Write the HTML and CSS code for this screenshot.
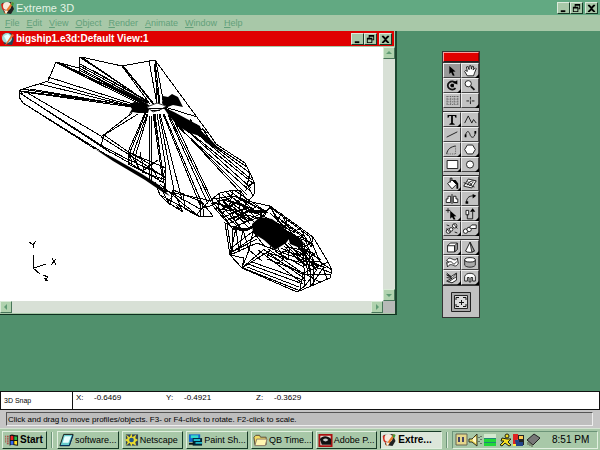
FILE: index.html
```html
<!DOCTYPE html>
<html lang="en">
<head>
<meta charset="utf-8">
<title>Extreme 3D</title>
<link rel="stylesheet" href="styles.css">
</head>
<body>
<svg class="defs" aria-hidden="true">
  <symbol id="min" viewBox="0 0 12 11"><path d="M3 8h5v2H3z"/></symbol>
  <symbol id="restore" viewBox="0 0 12 11"><path d="M4 1h6v6H8V6h1V3H5v1H4zM2 4h6v6H2zM3 6v3h4V6z" fill-rule="evenodd"/></symbol>
  <symbol id="close" viewBox="0 0 12 11"><path d="M2 2h2l2 2 2-2h2v1L7 6l3 3v1H8L6 8l-2 2H2V9l3-3-3-3z"/></symbol>
  <symbol id="e3d" viewBox="0 0 14 14"><path d="M1 2l9-1 3 7-3 5-7-1z" fill="#222"/><path d="M0 3l3-1 1 9-3-3z" fill="#d62a1c"/><circle cx="6" cy="5" r="4" fill="#f6e9dc"/><path d="M13 2L5 13l-2-1 8-11z" fill="#e8792a"/><path d="M11 1l2 1-1 3-2-1z" fill="#389b40"/><path d="M3 9l4 1-2 3z" fill="#f8f0e0"/></symbol>
  <symbol id="doc" viewBox="0 0 14 14"><path d="M1 2l9-1 3 6-2 6-8-1z" fill="#245"/><path d="M0 3l3-1 1 9-3-3z" fill="#d62a1c"/><circle cx="6" cy="6" r="5" fill="#9ee0dc"/><path d="M3 4l4-2 3 3-4 5z" fill="#e6ffff"/><path d="M13 3L6 12l-2 1 7-11z" fill="#e87030"/></symbol>
</svg>

<header class="titlebar">
  <svg class="app-icon"><use href="#e3d"/></svg>
  <h1>Extreme 3D</h1>
  <div class="controls">
    <button aria-label="Minimize"><svg><use href="#min"/></svg></button>
    <button aria-label="Restore"><svg><use href="#restore"/></svg></button>
    <button class="close" aria-label="Close"><svg><use href="#close"/></svg></button>
  </div>
</header>

<nav class="menu">
  <button><u>F</u>ile</button>
  <button><u>E</u>dit</button>
  <button><u>V</u>iew</button>
  <button><u>O</u>bject</button>
  <button><u>R</u>ender</button>
  <button><u>A</u>nimate</button>
  <button><u>W</u>indow</button>
  <button><u>H</u>elp</button>
</nav>

<main class="workspace">
  <section class="view">
    <header class="view-title">
      <svg class="app-icon"><use href="#doc"/></svg>
      <h2>bigship1.e3d:Default View:1</h2>
      <div class="controls">
        <button aria-label="Minimize view"><svg><use href="#min"/></svg></button>
        <button aria-label="Restore view"><svg><use href="#restore"/></svg></button>
        <button class="close" aria-label="Close view"><svg><use href="#close"/></svg></button>
      </div>
    </header>
    <div class="view-body">
      <svg class="scene" viewBox="0 47 383 254" preserveAspectRatio="xMinYMin meet" role="img" aria-label="Wireframe ship">
        <g class="wire">
          <!-- wings and upper hull -->
          <path d="M20 90L48 81L56 62L79 68V58L81 57L122 66L155 60L210 135M20 90L19 97L23 103L110 157L167 191M20 90L23 95L104 147M20 93L105 149L166 184M23 103L95 149M26 92L101 136"/>
          <path d="M56 62L146 104M56 62L143 103M79 68L146 104M79 72L145 105M80 66L147 103M81 58L148 102M83 58L149 103M48 77L133 104M48 82L134 106M40 84L134 107M22 89L132 106M24 92L132 107M30 89L131 106M57 63L138 103M79 70L142 102M62 64L139 101M92 70L146 100M80 64L140 97M21 91L128 105"/>
          <path d="M79 72L79 57M122 66L150 104M123 66L153 104M125 68L154 104M149 61L157 104M155 60L157 104M155 61L160 104M156 61L164 105M154 64L159 103M165 107L197 117"/>
          <path d="M132 113L101 137M138 114L104 135L101 145L110 153M104 135L130 153L166 168M104 147L133 162M101 137L166 178"/>
          <path d="M145 113L128 152L129 164M146 113L130 152L132 165M147 114L133 154M148 114L135 157L138 168M149 114L150 180M151 114L152 182M153 114L162 176M154 114L164 180M155 114L165 191M157 114L166 168L165 190M159 114L174 190M160 114L182 200M163 114L200 205M164 114L203 206M168 115L208 204M169 115L211 202M172 116L212 200"/>
          <path d="M130 153L128 164L140 170L130 153L150 164L142 172L166 180M140 152L144 170L158 160M150 164L160 182L166 168M128 159L163 176"/>
          <path d="M210 135L216 144L245 163L250 173L254 182L255 193L247 203M179 128L250 191M182 126L251 188M188 131L254 184M190 128L252 180M198 134L250 173M205 139L247 167M176 124L247 195M174 121L240 192M250 173L246 190L254 182L248 186L253 196"/>
          <path d="M163 107L212 143M166 108L215 145M172 112L208 133M196 124L206 138M190 119L200 135M202 128L212 143"/>
        </g>
        <g class="mass">
          <path d="M129 105L134 102L146 103L150 106L148 113L138 113L133 112L129 114L132 109Z"/>
          <path d="M163 96L168 97L172 94L178 97L180 101L183 107L173 105L165 108L162 103Z"/>
          <path d="M163 107L174 112L200 126L203 137L190 133L179 127L170 117Z"/>
          <path d="M199 129L212 141L223 153L205 142Z"/>
          <path d="M95 149L112 157L142 174L159 185L170 196L164 193L145 180L113 161Z"/>
          <path d="M252 224L260 217L272 219L279 224L292 235L286 243L275 250L264 240L253 233Z"/>
          <path d="M110 83L146 101L148 104L138 100ZM112 90L138 100L147 104Z"/>
          <path d="M288 236L297 236L304 243L300 248L290 244Z"/>
        </g>
        <path class="hub" d="M147 107L157 103L166 106L162 109L153 112Z"/>
        <path class="wire" d="M149 108h15M151 110h9"/>
        <g class="wire">
          <!-- underside of the hull -->
          <path d="M155 182L160 195L167 202L183 212L178 204L200 217L213 216M159 185L170 205L173 190L183 212M160 184L182 203L200 217L201 201L213 216M165 191L198 198L212 201M163 188L200 209L213 205M160 195L181 206M173 190L202 202L204 216M183 193L185 209L196 215L210 200M176 205L181 211M167 202L175 194"/>
          <!-- neck -->
          <path d="M212 205L212 199L220 193L233 190L241 191L247 201L270 206M212 199L234 196L247 203M211 204L236 196L254 206L267 211L249 230L232 228L212 205M213 202L230 225M216 199L242 229M219 196L249 228M222 194L255 223M226 192L259 220M230 191L263 217M234 190L268 213M212 205L220 200L240 203L260 213M218 211L235 203L253 211M224 217L243 209L262 215M230 223L247 215L260 218M233 190L229 208L240 230M241 191L239 212L250 224M247 203L235 223M220 193L218 211M241 198L262 210M214 208L246 213M217 203L251 220M221 214L240 199M226 221L256 207M233 228L264 212M225 199L246 206M222 205L240 212M212 203L233 207L245 216M216 207L236 225M223 202L245 220M229 200L250 218M233 198L256 214M228 214L246 208M232 219L250 211"/>
          <!-- nose -->
          <path d="M270 206L313 237L327 260L332 270L330 278L297 292L242 268L230 255L225 223L233 227L265 215L270 206M263 212L271 208L309 236L320 262L332 270M270 206L278 222L281 213L292 234L300 228L311 247L313 237M271 208L284 229M287 218L285 233L307 239M230 255L236 228L239 252L243 230L249 250L253 231L265 247M227 224L232 255M230 249L252 232M233 228L232 252L260 233M230 255L257 243L275 250M230 253L257 239M242 268L263 250M242 268L249 250L262 261M242 268L269 251M230 255L244 258L242 268"/>
          <path d="M247 267L299 287M248 264L303 284M252 262L306 281M243 268L298 290M258 250L301 282M263 249L305 279M268 249L304 274M269 253L315 267M275 250L320 266M281 248L326 268M265 253L302 274L330 274M267 259L304 273L328 262M281 239L307 267M287 233L308 260M290 234L316 270M294 236L318 268M298 239L321 262M301 239L304 255L290 247L288 260L275 251"/>
          <path d="M297 292L305 286L303 249L309 249L311 286L330 278M300 290L303 273L320 282M305 286L318 268L332 273M311 286L323 268L327 279M303 249L321 260M300 259L326 268M305 239L314 262L313 287M296 237L312 243L301 248L315 254L304 261L319 262M286 247L302 250M282 251L307 256M278 253L304 267M271 246L267 257M278 248L284 259L277 264M263 216L294 232M270 213L301 241M277 217L304 236M281 221L311 243M302 244L310 272M304 243L308 276M288 243L306 262M284 246L305 266"/>
          <path class="dense" d="M277 226L300 240M233 228L246 230L262 222M250 212L266 211"/>
          <!-- axes -->
          <path d="M33.500 255V268L46 264M33 268L40 274M29 242L33 245L36 241M33 245V248M52 258L56 265M56 259L51 265M43 275L48 277L45 281M45 281L48 280M44 278l3 1"/>
        </g>
      </svg>
      <div class="vscroll"><button aria-label="Scroll up"><svg viewBox="0 0 8 8"><path d="M1 5l3-3 3 3z"/></svg></button><button aria-label="Scroll down"><svg viewBox="0 0 8 8"><path d="M1 3l3 3 3-3z"/></svg></button></div>
    </div>
    <div class="bottom">
      <div class="hscroll"><button aria-label="Scroll left"><svg viewBox="0 0 8 8"><path d="M5 1L2 4l3 3z"/></svg></button><button aria-label="Scroll right"><svg viewBox="0 0 8 8"><path d="M3 1l3 3-3 3z"/></svg></button></div>
      <div class="corner"></div>
    </div>
  </section>

  <aside class="palette" aria-label="Tools">
    <div class="grip"></div>
    <div class="tools">
      <button class="on flat" aria-label="Select"><svg viewBox="0 0 18 14"><path class="k" d="M6 2l7 6-3 .5 2 4-2 .5-2-4-2 2z"/></svg></button>
      <button aria-label="Pan"><svg viewBox="0 0 18 14"><path class="w" d="M6 13L3 8l1-1 2 1-1-5 1.500-.5L8 6V2l2-.5.5 4 1-3.500 1.500.5-.5 4L15 4l1 1-2 5-1 3z"/></svg></button>
      <button aria-label="Rotate view"><svg viewBox="0 0 18 14"><path class="l b" d="M13 4a5 4.500 0 1 0 0 6M7 7h4"/><path class="k" d="M10 4l5-3v5zM8 5h3v4H8z"/></svg></button>
      <button class="flat" aria-label="Zoom"><svg viewBox="0 0 18 14"><circle class="w" cx="7" cy="5" r="3.500"/><path class="l b" d="M10 8l4 4"/></svg></button>
      <button class="flat" aria-label="Grid"><svg viewBox="0 0 18 14"><path class="dots" d="M3 2.500h13M3 5.500h13M3 8.500h13M3 11.500h13M3.500 2v10M7.500 2v10M11.500 2v10M15.500 2v10"/></svg></button>
      <button aria-label="Center point"><svg viewBox="0 0 18 14"><path class="l" d="M9.500 3v3M9.500 8v3M5 7.500h3M11 7.500h3M9 7.500h1"/></svg></button>
    </div>
    <div class="tools">
      <button aria-label="Text"><svg viewBox="0 0 18 14"><path class="k" d="M4 2h10v3h-1l-1-2h-2v8l2 1v1H6v-1l2-1V3H6L5 5H4z"/></svg></button>
      <button class="flat" aria-label="Polyline"><svg viewBox="0 0 18 14"><path class="l" d="M3 11L7 3l4 8 2-4 3 4"/></svg></button>
      <button class="flat" aria-label="Line"><svg viewBox="0 0 18 14"><path class="l" d="M3 10l12-6"/></svg></button>
      <button class="flat" aria-label="Spline"><svg viewBox="0 0 18 14"><path class="l" d="M4 8c1-6 4-5 5-1s5 5 6-2"/><path class="k" d="M3 7h2v3H3zM14 3h2v3h-2z"/></svg></button>
      <button aria-label="Arc"><svg viewBox="0 0 18 14"><path class="l" d="M3 12c1-6 5-8 10-9"/><path class="dots" d="M13 3v9H3"/></svg></button>
      <button aria-label="Polygon"><svg viewBox="0 0 18 14"><path class="w" d="M6 2h6l3 5-3 5H6L3 7z"/></svg></button>
      <button aria-label="Rectangle"><svg viewBox="0 0 18 14"><path class="w" d="M3.500 2.500h12v9h-12z"/></svg></button>
      <button aria-label="Oval"><svg viewBox="0 0 18 14"><circle class="w" cx="9" cy="7" r="4"/></svg></button>
    </div>
    <div class="tools">
      <button aria-label="Paint bucket"><svg viewBox="0 0 18 14"><path class="w" d="M4 7l5-4 5 5-5 5z"/><path class="k" d="M9 3l4 0 3 4v6h-2V8z"/><path class="l" d="M7 6V1h2v3"/></svg></button>
      <button class="flat" aria-label="Surface"><svg viewBox="0 0 18 14"><path class="w" d="M2 10l5-8 9 2-5 8z"/><path class="l" d="M2 6l12 5M6 9c1-4 5-5 7-5M8 10l5-5M6 5c2 1 5 2 5 4"/></svg></button>
      <button class="flat" aria-label="Mirror"><svg viewBox="0 0 18 14"><path class="w" d="M2.500 7.500h2v-3h3v7h-5zM15.500 7.500h-2v-3h-3v7h5z"/><path class="l" d="M9 2v11"/></svg></button>
      <button class="flat" aria-label="Bend"><svg viewBox="0 0 18 14"><path class="l" d="M5 12c0-5 2-8 8-8"/><path class="k" d="M12 2l4 2-4 3zM4 10h3v3H4z"/></svg></button>
      <button aria-label="Edit points"><svg viewBox="0 0 18 14"><path class="k" d="M7 4l7 6-3 .5 2 3-2 .5-2-3-2 2z"/><path class="l" d="M2 3.500h5M4.500 1v5"/></svg></button>
      <button aria-label="Align"><svg viewBox="0 0 18 14"><path class="w" d="M4.500 3.500h3v5h-3z"/><path class="l" d="M6 8v5h6V5"/><path class="k" d="M9 5l3-4 3 4z"/></svg></button>
      <button aria-label="Link"><svg viewBox="0 0 18 14"><g class="w"><circle cx="5" cy="10" r="2.500"/><circle cx="8" cy="8" r="2"/><circle cx="12" cy="4" r="2.500"/></g><path class="l" d="M3 7l4 5M11 2l4 5M3 3l3 1M12 11l3 1"/></svg></button>
      <button aria-label="Unlink"><svg viewBox="0 0 18 14"><g class="w"><circle cx="4" cy="10" r="2.500"/><circle cx="8" cy="8" r="2.500"/><path d="M8 6l3-3h5v4h-5z"/></g></svg></button>
    </div>
    <div class="tools">
      <button aria-label="Cube"><svg viewBox="0 0 18 14"><path class="w" d="M4 5l3-3h8v7l-3 3H4z"/><path class="g" d="M12 5l3-3v7l-3 3z"/><path class="l" d="M4 5h8v7"/></svg></button>
      <button aria-label="Cone"><svg viewBox="0 0 18 14"><path class="w" d="M9 1l5 10c-2 2-8 2-10 0z"/><path class="g" d="M9 1l5 10-3 1z"/></svg></button>
      <button class="flat" aria-label="Extrude"><svg viewBox="0 0 18 14"><path class="w" d="M3 5c2-4 4-3 6-2s4 2 6-1l1 6c-2 4-4 3-6 2s-4-1-6 2l-1-5 2-1z"/><path class="l" d="M4 8c2-3 5-2 6 0s3 0 4-2"/></svg></button>
      <button class="flat" aria-label="Lathe"><svg viewBox="0 0 18 14"><path class="g" d="M3 4v6c2 3 10 3 12 0V4z"/><ellipse class="w" cx="9" cy="4" rx="6" ry="2.500"/></svg></button>
      <button aria-label="Sweep"><svg viewBox="0 0 18 14"><path class="w" d="M3 4l5 2 6-4v8l-5 3-6-2 6-3z"/><path class="l" d="M3 2l5 4M3 7l6 1 5-5M5 12l9-6"/></svg></button>
      <button aria-label="Skin"><svg viewBox="0 0 18 14"><path class="w" d="M3 11V6c1-5 11-5 12 0v5h-3V7h-2v5H8V7H6v4z"/></svg></button>
    </div>
    <div class="snap"><button aria-label="Working plane"><svg viewBox="0 0 20 20"><path class="g" d="M.5.5h19v19H.5z"/><path class="pale" d="M3.500 3.500h13v13h-13z"/><path class="l" d="M5 8V5.500h3M15 8V5.500h-3M5 12v2.500h3M15 12v2.500h-3M10.500 8v5M8 10.500h5"/></svg></button></div>
  </aside>
</main>

<section class="coords">
  <div class="mode">3D Snap</div>
  <dl>
    <div><dt>X:</dt><dd>-0.6469</dd></div>
    <div><dt>Y:</dt><dd>-0.4921</dd></div>
    <div><dt>Z:</dt><dd>-0.3629</dd></div>
  </dl>
</section>
<div class="status"><p>Click and drag to move profiles/objects. F3- or F4-click to rotate. F2-click to scale.</p></div>

<footer class="taskbar">
  <button class="start"><svg viewBox="0 0 16 14"><path d="M6 2c3-2 4 0 9 0v11c-5 0-6-2-9 0z" fill="#111"/><path d="M7 3c2-1 2 0 3 0v4H7z" fill="#e22"/><path d="M11 3l3 .5V7h-3z" fill="#2b4"/><path d="M7 8h3v4H7z" fill="#36e"/><path d="M11 8h3v4l-3-.5z" fill="#fd2"/><path d="M1 3h1M3 3h2M1 5h1M3 5h2M1 7h1M3 7h2M1 9h1M3 9h2M3 11h2" stroke="#a22" fill="none"/></svg>Start</button>
  <span class="divider"></span>
  <div class="tasks">
    <button><svg viewBox="0 0 16 14"><path d="M5 1h10l-4 12H1z" fill="#6cc" stroke="#111"/><path d="M6 3h7l-3 7H4z" fill="#e8ffff"/><path d="M1 13h10l4-11" fill="none" stroke="#036"/></svg><span>software...</span></button>
    <button><svg viewBox="0 0 16 14"><path d="M2 1h13v12H2z" fill="#345"/><path d="M8 0l1 4 4-3-1 4 3 2-3 2 1 4-4-2-1 3-2-4-4 3 2-4-3-2 3-2-2-4 4 3z" fill="#e8dc30"/><circle cx="8" cy="7" r="2.500" fill="#258"/></svg><span>Netscape</span></button>
    <button><svg viewBox="0 0 16 14"><path d="M1 1h12v8H1z" fill="#16c"/><path d="M3 2h8v3H3z" fill="#3dc"/><path d="M5 5h10v8H5z" fill="#023"/><path d="M6 6h7v2H6zM8 9h7v2H8z" fill="#2bc"/><path d="M1 10h5v2H1z" fill="#111"/></svg><span>Paint Sh...</span></button>
    <button><svg viewBox="0 0 16 14"><path d="M1 4l2-2h4l1 2h6v8H2z" fill="#f3dc64" stroke="#543"/><path d="M4 6h11l-2 7H2z" fill="#fff6b0" stroke="#876"/></svg><span>QB Time...</span></button>
    <button><svg viewBox="0 0 16 14"><path d="M1.500 1.500h13v12h-13z" fill="#e8dcd4" stroke="#a11" stroke-width="2"/><path d="M2 6c3-4 8-4 12 0v6H4z" fill="#111"/><path d="M5 7c2-2 4-2 6 0-2 2-4 2-6 0z" fill="#ccc"/></svg><span>Adobe P...</span></button>
    <button class="active"><svg viewBox="0 0 14 14"><use href="#e3d"/></svg><span>Extre...</span></button>
  </div>
  <span class="divider"></span>
  <div class="tray">
    <svg viewBox="0 0 94 14" role="img" aria-label="Tray icons">
      <path d="M1 1h11v11H1z" fill="#e5d68a" stroke="#665"/><path d="M3 4h2v5H3zM7 4h2v5H7z" fill="#446"/>
      <path d="M14 6h3l5-5v12l-5-4h-3z" fill="#eed95a" stroke="#332"/><path d="M18 5l3-1v6l-3-2z" fill="#fff8c8"/><path d="M24 4v1M24 8v1M26 3v1M26 10v1M26 6v1" stroke="#222"/>
      <path d="M29 1h12v4H29z" fill="#d3ead0"/><path d="M29 6h12v7H29z" fill="#20d838"/><path d="M29 5.500h12M29 9.500h12" stroke="#287"/>
      <circle cx="52" cy="3" r="2" fill="#f4df20" stroke="#221"/><path d="M47 5l5 1 4 0-3 3 3 3-2 1-4-3-3 3-2-1 4-4-3 0z" fill="#f4df20" stroke="#221"/>
      <path d="M58 1h5l1 4-3 3 4 4h-7z" fill="#d22"/><path d="M63 2h6v10h-6z" fill="#222"/><path d="M64 3h4v3h-4z" fill="#fc5"/><path d="M60 7h4v2h4v4h-7z" fill="#248"/><path d="M58 11h3v2h-3z" fill="#fe4"/>
      <path d="M72 7l7-6 6 4-7 7z" fill="#777" stroke="#222"/><path d="M73 9v3M75 10v3M77 11v3" stroke="#554"/>
    </svg>
    <time>8:51 PM</time>
  </div>
</footer>
</body>
</html>
```
FILE: styles.css
```css
* { box-sizing: border-box; }
body {
  margin: 0;
  min-height: 100vh;
  display: flex;
  flex-direction: column;
  background: #50906c;
  color: #000;
  font: 10px/12px "Liberation Sans", Arial, sans-serif;
}
button { font: inherit; color: inherit; padding: 0; margin: 0; border: 0; background: none; }
svg { display: block; }
h1, h2, p, dl, dd { margin: 0; }
.defs { width: 0; height: 0; position: absolute; }

.titlebar, .view-title { display: flex; align-items: center; height: 15px; padding: 0 2px 0 1px; }
.titlebar { background: #62a982; color: #e4f2e4; }
.app-icon { width: 14px; height: 14px; margin-right: 1px; }
h1 { font-size: 11px; line-height: 14px; font-weight: normal; }
h2 { font-size: 10px; line-height: 14px; font-weight: bold; }
.controls { display: flex; margin-left: auto; }
.controls button { width: 13px; height: 12px; background: #a8c8a8; border: 1px solid; border-color: #dceadc #173a27 #173a27 #dceadc; }
.controls svg { width: 11px; height: 10px; }
.controls .close { margin-left: 2px; }

.menu { display: flex; gap: 7px; height: 16px; padding: 0 5px; background: #a8c8a8; color: #62a07a; font: 9px/14px "Liberation Sans", Arial, sans-serif; }

.workspace { position: relative; flex: 1; min-height: 360px; }
.view { position: absolute; left: 0; top: 0; width: 397px; background: #a8c8a8; border-right: 2px solid #1b442e; border-bottom: 1px solid #0e2f1e; }
.view-title { background: #e00000; color: #fff; margin-right: 1px; }
.view-body { display: flex; margin-top: 1px; }
.scene { flex: 1; min-width: 0; background: #fff; }
.wire { fill: none; stroke: #000; stroke-width: 1; shape-rendering: crispEdges; }
.dense { stroke-width: 3; }
.mass { fill: #000; }
.hub { fill: #fff; stroke: #333; }
.vscroll, .hscroll { display: flex; justify-content: space-between; background: #d8e0d6; }
.vscroll { width: 12px; flex-direction: column; }
.bottom { display: flex; height: 12px; margin-bottom: 1px; }
.hscroll { flex: 1; }
.corner { width: 12px; background: #b8bab8; }
.vscroll button, .hscroll button { width: 12px; height: 12px; display: grid; place-items: center; background: #b0d2ae; border: 1px solid; border-color: #d8ead6 #477559 #477559 #d8ead6; }
.vscroll svg, .hscroll svg { width: 8px; height: 8px; fill: #5f9b73; }

.palette { position: absolute; left: 442px; top: 20px; width: 38px; background: #c2c2c2; border: 1px solid #333; }
.grip { height: 10px; background: #e00000; border: 1px solid; border-color: #f3a0a0 #800 #222 #f3a0a0; }
.tools { display: grid; grid-template-columns: 1fr 1fr; grid-auto-rows: 15px; border-top: 1px solid #333; margin-bottom: 3px; }
.tools button { position: relative; background: #c2c2c2; border: 1px solid; border-color: #eee #444 #444 #eee; }
.tools button::after { content: ""; position: absolute; right: -1px; bottom: -1px; border: 2px solid #000; border-left-color: transparent; border-top-color: transparent; }
.tools .flat::after { display: none; }
.tools .on { background: #999; }
.tools svg { width: 16px; height: 13px; }
.k { fill: #000; }
.l { fill: none; stroke: #111; }
.b { stroke-width: 2; }
.w { fill: #fff; stroke: #111; }
.g { fill: #aaa; stroke: #222; }
.pale { fill: #ddd; stroke: #222; }
.dots { fill: none; stroke: #555; stroke-dasharray: 1 1; }
.snap { display: grid; place-items: center; height: 32px; border-top: 1px solid #333; margin-top: -3px; }
.snap svg { width: 20px; height: 20px; }

.coords { display: flex; height: 19px; background: #fff; border: 1px solid #111; font-size: 8px; line-height: 10px; }
.mode { width: 72px; padding: 4px 3px; border-right: 1px solid #111; font-size: 7px; }
dl { display: flex; padding: 1px 3px; }
dl div { display: flex; width: 90px; }
dt { width: 18px; }
.status { height: 18px; padding: 2px 7px 2px 6px; background: #c6c6c6; }
.status p { height: 14px; padding: 1px; border: 1px solid; border-color: #555 #eee #eee #555; font-size: 8px; line-height: 11px; background: #bebebe; white-space: nowrap; }

.taskbar { display: flex; align-items: center; gap: 4px; height: 22px; padding: 1px 2px; background: #a8c8a8; border-top: 1px solid #d4e4d2; font: 9px/16px "Liberation Sans", Arial, sans-serif; }
.taskbar button { display: flex; align-items: center; gap: 1px; height: 18px; padding: 0 1px; border: 1px solid; border-color: #e2f0e0 #173a27 #173a27 #e2f0e0; background: #a8c8a8; white-space: nowrap; }
.taskbar button svg { width: 15px; height: 14px; flex: none; }
.taskbar .start { width: 45px; font-size: 10px; font-weight: bold; }
.divider { width: 2px; height: 16px; border-left: 1px solid #6c9478; border-right: 1px solid #e2f0e0; }
.tasks { display: flex; flex: 1; gap: 3px; min-width: 0; }
.tasks button { flex: 1 1 0; min-width: 0; }
.taskbar .active { background: #dce6da; border-color: #173a27 #e2f0e0 #e2f0e0 #173a27; font-size: 10px; font-weight: bold; }
.tray { display: flex; align-items: center; gap: 3px; width: 146px; height: 18px; padding: 0 2px; border: 1px solid; border-color: #6c9478 #e2f0e0 #e2f0e0 #6c9478; font-size: 10px; }
.tray svg { width: 94px; height: 14px; flex: none; }
```
